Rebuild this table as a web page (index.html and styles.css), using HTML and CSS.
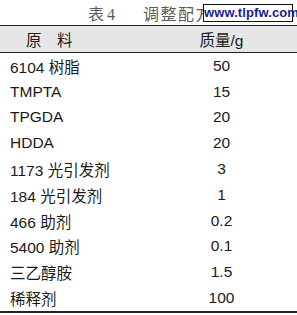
FILE: index.html
```html
<!DOCTYPE html>
<html lang="zh">
<head>
<meta charset="utf-8">
<link rel="stylesheet" href="styles.css">
</head>
<body>
<div class="page">
  <div class="caption">
    <span class="cap-no">表4</span>
    <span class="cap-text">调整配方</span>
    <span class="watermark">www.tlpfw.com</span>
  </div>
  <div class="table">
    <div class="row head">
      <div class="name">原　料</div>
      <div class="val">质量/g</div>
    </div>
    <div class="row"><div class="name">6104 树脂</div><div class="val">50</div></div>
    <div class="row"><div class="name">TMPTA</div><div class="val">15</div></div>
    <div class="row"><div class="name">TPGDA</div><div class="val">20</div></div>
    <div class="row"><div class="name">HDDA</div><div class="val">20</div></div>
    <div class="row"><div class="name">1173 光引发剂</div><div class="val">3</div></div>
    <div class="row"><div class="name">184 光引发剂</div><div class="val">1</div></div>
    <div class="row"><div class="name">466 助剂</div><div class="val">0.2</div></div>
    <div class="row"><div class="name">5400 助剂</div><div class="val">0.1</div></div>
    <div class="row"><div class="name">三乙醇胺</div><div class="val">1.5</div></div>
    <div class="row"><div class="name">稀释剂</div><div class="val">100</div></div>
  </div>
</div>
</body>
</html>
```
FILE: styles.css
```css
html, body {
  margin: 0;
  padding: 0;
  background: #ffffff;
}
.page {
  width: 297px;
  height: 315px;
  overflow: hidden;
  font-family: "Liberation Sans", "Noto Sans CJK SC", sans-serif;
  color: #1a1a1a;
}
.caption {
  position: relative;
  height: 25px;
  display: flex;
  align-items: center;
  padding-left: 88px;
  font-family: "Liberation Serif", "Noto Sans CJK SC", serif;
  font-size: 16px;
  color: #5a5a5a;
}
.cap-no {
  width: 55px;
  letter-spacing: 3px;
}
.cap-text {
  letter-spacing: 1.5px;
}
.watermark {
  position: absolute;
  left: 203px;
  top: 4px;
  width: 88px;
  height: 16px;
  border: 1px solid #111111;
  background: #ffffff;
  font-family: "Liberation Sans", sans-serif;
  font-weight: bold;
  font-size: 13px;
  letter-spacing: 0.1px;
  line-height: 16px;
  color: #1c1c8c;
  text-align: center;
}
.table {
  border-top: 1px solid #222222;
  border-bottom: 2px solid #222222;
}
.row {
  display: grid;
  grid-template-columns: 146px 151px;
  height: 25.8px;
  align-items: center;
  font-size: 15.5px;
}
.row.head {
  height: 26px;
  background: #e6e6e6;
  border-bottom: 1px solid #222222;
}
.head .name {
  padding-left: 26px;
}
.name {
  padding-left: 10px;
  white-space: nowrap;
}
.val {
  text-align: center;
}
```
